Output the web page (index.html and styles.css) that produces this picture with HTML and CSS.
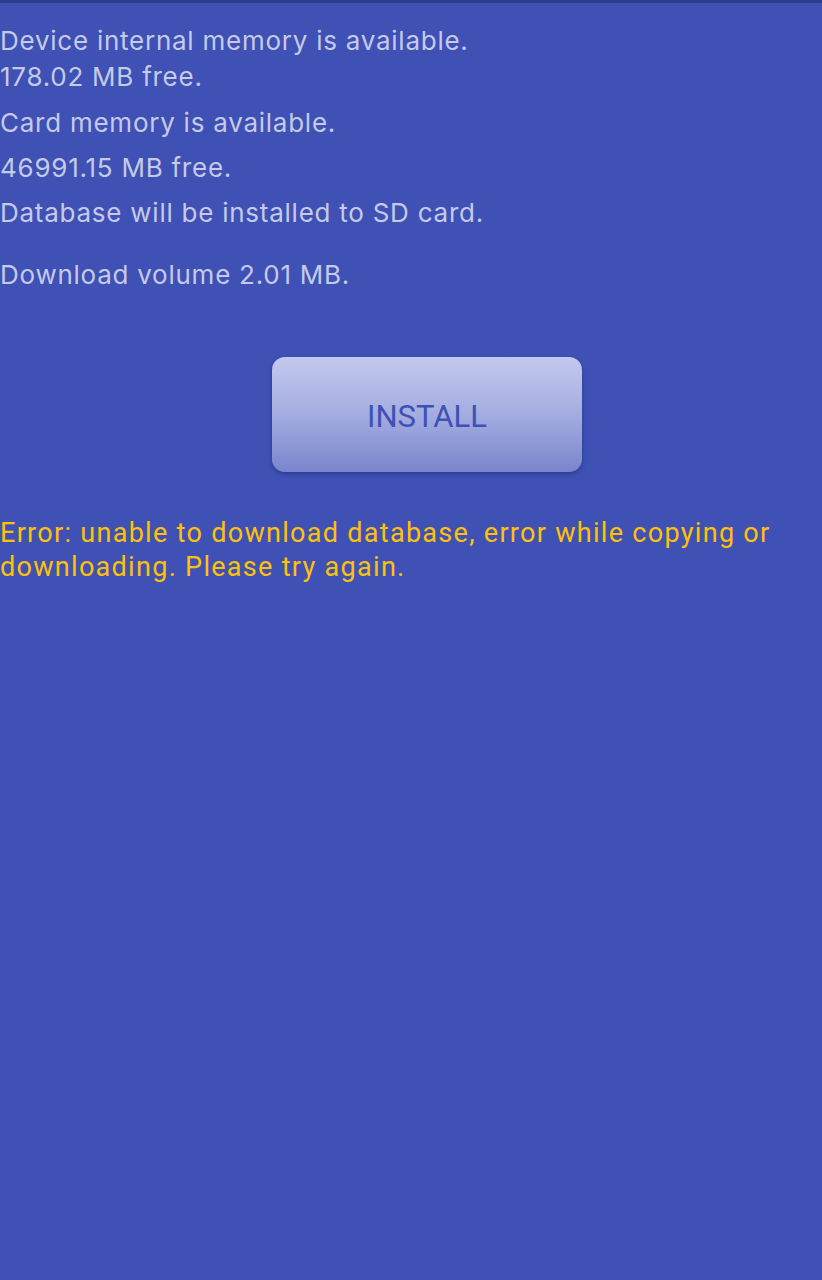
FILE: index.html
```html
<!DOCTYPE html>
<html>
<head>
<meta charset="utf-8">
<link rel="stylesheet" href="styles.css">
</head>
<body>
<div class="screen">
  <div class="info">
    <p class="line l1">Device internal memory is available.</p>
    <p class="line l2">178.02 MB free.</p>
    <p class="line l3">Card memory is available.</p>
    <p class="line l4">46991.15 MB free.</p>
    <p class="line l5">Database will be installed to SD card.</p>
    <p class="line l6">Download volume 2.01 MB.</p>
  </div>
  <div class="actions">
    <button class="install">INSTALL</button>
  </div>
  <p class="error">Error: unable to download database, error while copying or downloading. Please try again.</p>
</div>
</body>
</html>
```
FILE: styles.css
```css
html, body {
  margin: 0;
  padding: 0;
  background: #3f51b5;
}
.screen {
  width: 822px;
  height: 1280px;
  background: #3f51b5;
  border-top: 3px solid #2f3d8f;
  box-sizing: border-box;
  display: flex;
  flex-direction: column;
}
.info {
  display: flex;
  flex-direction: column;
  padding-top: 20px;
}
.line {
  margin: 0;
  font-family: Inter, "Noto Sans", sans-serif;
  font-size: 26px;
  line-height: 36px;
  letter-spacing: 0.75px;
  color: #c5cae9;
  white-space: nowrap;
}
.l3 { margin-top: 10px; }
.l4 { margin-top: 9px; }
.l5 { margin-top: 9px; }
.l6 { margin-top: 26px; }
.actions {
  display: flex;
  justify-content: center;
  padding-left: 32px;
  margin-top: 64px;
}
.install {
  width: 310px;
  height: 115px;
  border: none;
  border-radius: 13px;
  background: linear-gradient(to bottom, #c3c9ee 0%, #a4ade0 50%, #7985cd 100%);
  box-shadow: 0 2px 4px rgba(20, 30, 90, 0.45);
  font-family: Roboto, "Noto Sans", sans-serif;
  font-size: 31px;
  color: #3f51b5;
  padding: 4px 0 0 0;
}
.error {
  margin: 44px 0 0 0;
  font-family: Roboto, "Noto Sans", sans-serif;
  font-size: 27px;
  line-height: 34px;
  letter-spacing: 1.3px;
  color: #ffc107;
  padding-right: 20px;
}
```
